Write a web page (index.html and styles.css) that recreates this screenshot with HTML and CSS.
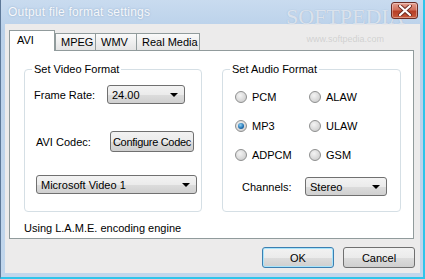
FILE: index.html
```html
<!DOCTYPE html>
<html lang="en">
<head>
    <meta charset="UTF-8">
    <title>Output file format settings</title>
    <link rel="stylesheet" href="styles.css">
</head>
<body>
    <div class="window">
        <div class="titlebar">
            <span class="title">Output file format settings</span>
            <div class="watermark">
                <span class="wm-big">SOFTPEDIA</span>
                <span class="wm-small">www.softpedia.com</span>
            </div>
            <button class="close-btn" aria-label="Close">
                <svg width="14" height="11" viewBox="0 0 14 11">
                    <path d="M2 1 L12 10 M12 1 L2 10" stroke="#6b2a22" stroke-width="4" stroke-linecap="round"/>
                    <path d="M2 1 L12 10 M12 1 L2 10" stroke="#ffffff" stroke-width="2.2" stroke-linecap="round"/>
                </svg>
            </button>
        </div>

        <div class="client">
            <div class="tabs">
                <div class="tab active">AVI</div>
                <div class="tab">MPEG</div>
                <div class="tab">WMV</div>
                <div class="tab">Real Media</div>
            </div>

            <div class="tab-panel">
                <div class="groups">
                    <fieldset class="group video-group">
                        <legend>Set Video Format</legend>
                        <div class="row frame-row">
                            <span class="label">Frame Rate:</span>
                            <div class="select frame-select"><span>24.00</span><i class="arrow"></i></div>
                        </div>
                        <div class="row codec-row">
                            <span class="label">AVI Codec:</span>
                            <button class="btn codec-btn">Configure Codec</button>
                        </div>
                        <div class="select codec-select"><span>Microsoft Video 1</span><i class="arrow"></i></div>
                    </fieldset>

                    <fieldset class="group audio-group">
                        <legend>Set Audio Format</legend>
                        <div class="radios">
                            <label class="radio"><i class="dot"></i>PCM</label>
                            <label class="radio"><i class="dot"></i>ALAW</label>
                            <label class="radio"><i class="dot checked"></i>MP3</label>
                            <label class="radio"><i class="dot"></i>ULAW</label>
                            <label class="radio"><i class="dot"></i>ADPCM</label>
                            <label class="radio"><i class="dot"></i>GSM</label>
                        </div>
                        <div class="row channels-row">
                            <span class="label">Channels:</span>
                            <div class="select channels-select"><span>Stereo</span><i class="arrow"></i></div>
                        </div>
                    </fieldset>
                </div>
                <p class="engine">Using L.A.M.E. encoding engine</p>
            </div>

            <div class="actions">
                <button class="btn ok-btn">OK</button>
                <button class="btn cancel-btn">Cancel</button>
            </div>
        </div>
    </div>
</body>
</html>
```

FILE: styles.css
```css
* {
    margin: 0;
    padding: 0;
    box-sizing: border-box;
}

body {
    font-family: 'Liberation Sans', Arial, sans-serif;
    font-size: 11px;
    color: #000;
    background: #c4d8ee;
    white-space: nowrap;
}

.window {
    width: 425px;
    height: 279px;
    display: flex;
    flex-direction: column;
    background: linear-gradient(180deg, #c9dbef 0%, #bad1ea 30px, #c1d6ec 100%);
    border-left: 1px solid #5d7898;
    border-right: 2px solid #2fc4ea;
    border-bottom: 2px solid #2fc4ea;
}

.titlebar {
    height: 24px;
    display: flex;
    align-items: center;
    padding-left: 7px;
    position: relative;
}

.title {
    font-size: 12px;
    color: #f6f8fb;
    text-shadow: 0 0 2px #8ea8c6;
    letter-spacing: 0.2px;
}

.watermark {
    position: absolute;
    left: 285px;
    top: 6px;
    display: flex;
    flex-direction: column;
    align-items: center;
    pointer-events: none;
}

.wm-big {
    font-family: 'Liberation Serif', serif;
    font-size: 22px;
    line-height: 22px;
    color: rgba(244, 247, 252, 0.7);
    text-shadow: 0 0 1px rgba(140, 160, 185, 0.7);
}

.wm-small {
    font-size: 9px;
    margin-top: 6px;
    color: rgba(175, 175, 175, 0.45);
}

.close-btn {
    position: relative;
    margin-left: auto;
    margin-right: 5px;
    margin-top: -4px;
    width: 27px;
    height: 17px;
    border: 1px solid #6b2c25;
    border-radius: 3px;
    background: linear-gradient(180deg, #e4a293 0%, #d0705c 45%, #b73e26 55%, #c75a3d 100%);
    display: flex;
    align-items: center;
    justify-content: center;
    box-shadow: inset 0 0 0 1px rgba(255, 255, 255, 0.35);
}

.client {
    flex: 1;
    margin: 0 3px 4px 4px;
    background: #ecebeb;
    padding: 6px 5px 0 4px;
    display: flex;
    flex-direction: column;
}

.tabs {
    display: flex;
    align-items: flex-end;
    height: 20px;
    position: relative;
    z-index: 1;
}

.tab {
    height: 17px;
    padding: 0 5px;
    border: 1px solid #919b9c;
    border-bottom: none;
    background: linear-gradient(180deg, #fafafa 0%, #e4e4e4 100%);
    display: flex;
    align-items: center;
    margin-right: -1px;
}

.tab.active {
    height: 21px;
    margin-bottom: -1px;
    background: #fff;
    width: 46px;
    padding: 0 0 3px 7px;
    margin-right: 0;
}

.tab:nth-child(2) { width: 41px; }
.tab:nth-child(3) { width: 42px; }
.tab:nth-child(4) { width: 64px; }

.tab-panel {
    height: 189px;
    width: 405px;
    background: #fff;
    border: 1px solid #919b9c;
    padding: 12px 12px 0 14px;
}

.groups {
    display: flex;
    gap: 20px;
}

.group {
    flex: none;
    min-width: 0;
    border: 1px solid #d5dfe5;
    border-radius: 4px;
    height: 149px;
    padding: 0 7px 0 9px;
}

.group legend {
    padding: 0 2px;
    margin-left: -2px;
}

.video-group {
    width: 178px;
}

.audio-group {
    width: 179px;
}

.row {
    display: flex;
    align-items: center;
}

.frame-row {
    margin-top: 10px;
}

.frame-row .label {
    width: 73px;
}

.codec-row {
    margin-top: 27px;
    padding-left: 2px;
}

.codec-row .label {
    width: 74px;
}

.select {
    height: 19px;
    border: 1px solid #707070;
    border-radius: 3px;
    background: linear-gradient(180deg, #f3f3f3 0%, #ebebeb 50%, #dcdcdc 51%, #d0d0d0 100%);
    display: flex;
    align-items: center;
    padding: 1px 6px 0 4px;
}

.select span {
    flex: 1;
}

.arrow {
    width: 0;
    height: 0;
    border-left: 4px solid transparent;
    border-right: 4px solid transparent;
    border-top: 4px solid #000;
}

.frame-select {
    width: 78px;
}

.codec-select {
    width: 161px;
    margin-top: 23px;
    margin-left: 2px;
}

.btn {
    font-family: inherit;
    font-size: 11px;
    padding: 0;
    white-space: nowrap;
    border: 1px solid #707070;
    border-radius: 3px;
    background: linear-gradient(180deg, #f2f2f2 0%, #ebebeb 50%, #dddddd 51%, #cfcfcf 100%);
    color: #000;
}

.codec-btn {
    width: 84px;
    height: 21px;
    letter-spacing: -0.3px;
}

.radios {
    display: grid;
    grid-template-columns: 74px 1fr;
    row-gap: 13px;
    margin-top: 14px;
    padding-left: 3px;
}

.radio {
    display: flex;
    align-items: center;
    gap: 5px;
    height: 16px;
}

.dot {
    width: 12px;
    height: 12px;
    border-radius: 50%;
    border: 1px solid #8e8f8f;
    background: radial-gradient(circle at 40% 35%, #f4f4f4 0%, #d8d8d8 60%, #c4c4c4 100%);
    display: flex;
    align-items: center;
    justify-content: center;
}

.dot.checked::after {
    content: '';
    width: 6px;
    height: 6px;
    border-radius: 50%;
    background: radial-gradient(circle at 40% 35%, #8fd2f5 0%, #1e6eb0 60%, #0d3f75 100%);
}

.channels-row {
    margin-top: 14px;
    padding-left: 10px;
}

.channels-row .label {
    width: 63px;
}

.channels-select {
    width: 82px;
}

.engine {
    margin-top: 10px;
}

.actions {
    display: flex;
    justify-content: flex-end;
    gap: 9px;
    margin-top: 8px;
}

.ok-btn,
.cancel-btn {
    width: 72px;
    height: 21px;
}

.ok-btn {
    border-color: #3c7fb1;
    box-shadow: inset 0 0 0 1px #a8e4fb;
}
```
